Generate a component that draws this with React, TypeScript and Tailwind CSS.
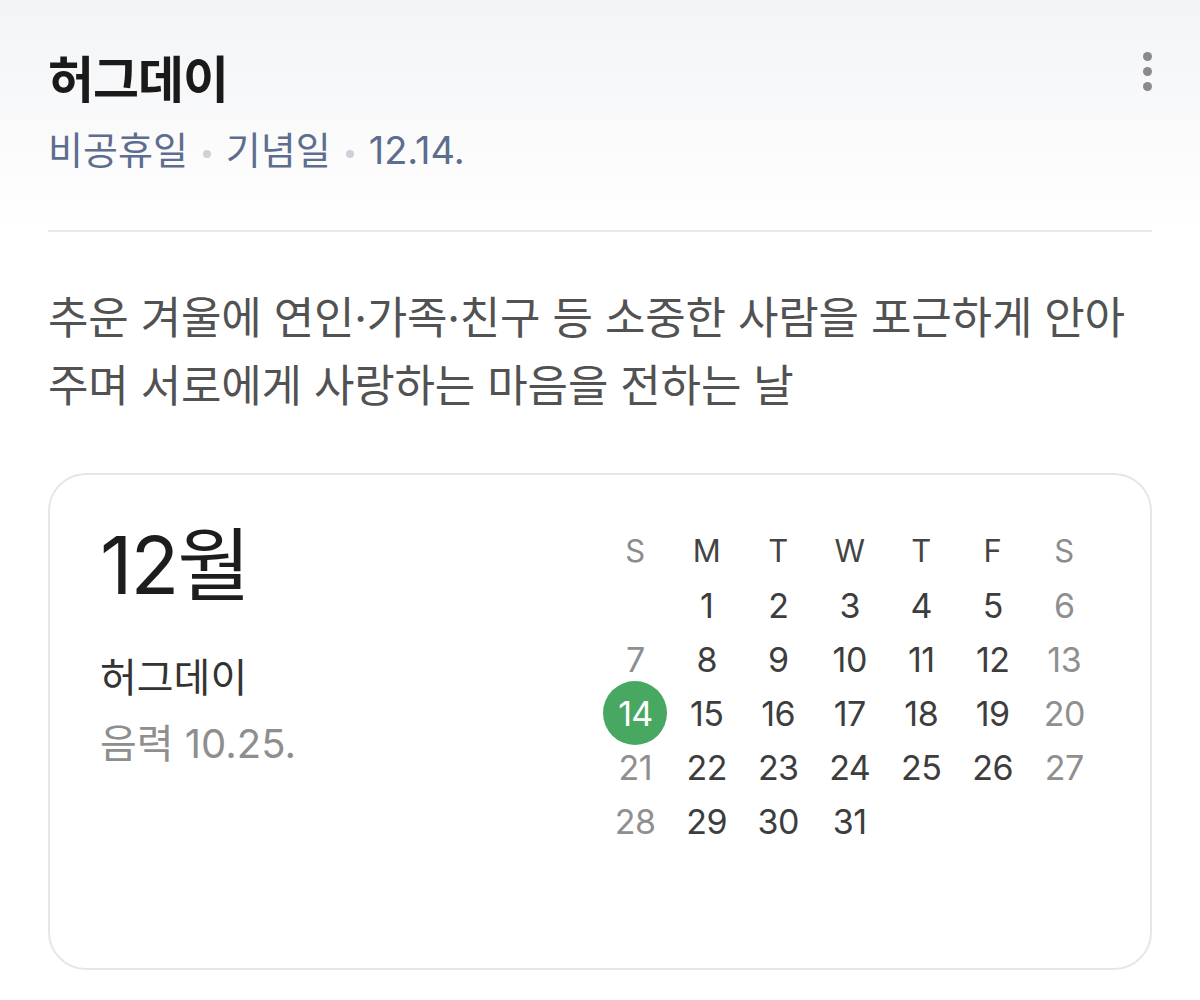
import React from "react";

const days: (number | null)[] = [null, ...Array.from({ length: 31 }, (_, i) => i + 1)];
const heads = ["S", "M", "T", "W", "T", "F", "S"];

function MoreIcon() {
  return (
    <div className="flex flex-col items-center gap-[6px] pt-[2px]">
      <span className="block w-[9px] h-[9px] rounded-full bg-[#8a8a8a]" />
      <span className="block w-[9px] h-[9px] rounded-full bg-[#8a8a8a]" />
      <span className="block w-[9px] h-[9px] rounded-full bg-[#8a8a8a]" />
    </div>
  );
}

function Dot() {
  return <span className="mx-[15px] inline-block w-[8px] h-[8px] rounded-full bg-[#cdd1d8] align-middle" />;
}

function MonthGrid() {
  return (
    <div className="grid grid-cols-[repeat(7,71.5px)] auto-rows-[54px]">
      {heads.map((h, i) => (
        <div
          key={"h" + i}
          className={
            "flex items-center justify-center text-[31px] " +
            (i === 0 || i === 6 ? "text-[#8c8c8c]" : "text-[#444]")
          }
        >
          {h}
        </div>
      ))}
      {days.map((d, i) => {
        const col = i % 7;
        const weekend = col === 0 || col === 6;
        if (d === null) return <div key={"e" + i} />;
        if (d === 14) {
          return (
            <div key={d} className="flex items-center justify-center">
              <span className="flex items-center justify-center w-[64px] h-[64px] rounded-full bg-[#48a862] text-white text-[34px] tracking-[-1px]">
                14
              </span>
            </div>
          );
        }
        return (
          <div
            key={d}
            className={
              "flex items-center justify-center text-[34px] tracking-[-0.5px] " +
              (weekend ? "text-[#8f8f8f]" : "text-[#3d3d3d]")
            }
          >
            {d}
          </div>
        );
      })}
    </div>
  );
}

export default function App() {
  return (
    <div className="w-[1200px] min-h-[1000px] bg-white font-['Inter','Noto_Sans_CJK_KR',sans-serif]">
      {/* header */}
      <div className="bg-gradient-to-b from-[#f3f4f6] to-white px-[48px] pt-[50px]">
        <div className="flex items-start justify-between">
          <h1 className="text-[50px] leading-[60px] font-bold text-[#1a1a1a] tracking-[-1px]">허그데이</h1>
          <MoreIcon />
        </div>
        <div className="mt-[17px] text-[38px] leading-[46px] text-[#5d6d8e]">
          비공휴일<Dot />기념일<Dot />12.14.
        </div>
        <div className="mt-[57px] h-[2px] bg-[#e8e9ec]" />
      </div>

      <div className="px-[48px]">
        <p className="mt-[52px] text-[44px] leading-[68px] text-[#525252] tracking-[-0.2px]">
          추운 겨울에 연인·가족·친구 등 소중한 사람을 포근하게 안아 주며 서로에게 사랑하는 마음을 전하는 날
        </p>

        <div className="mt-[53px] h-[497px] rounded-[38px] border-2 border-[#e6e6e6] flex justify-between pl-[50px] pr-[50px] pt-[49px]">
          <div className="pt-[2px]">
            <div className="text-[80px] leading-[78px] text-[#1d1d1d] tracking-[-2px]">12월</div>
            <div className="mt-[50px] text-[40px] leading-[48px] text-[#333]">허그데이</div>
            <div className="mt-[18px] text-[40px] leading-[48px] text-[#8e8e8e]">음력 10.25.</div>
          </div>
          <MonthGrid />
        </div>
      </div>
    </div>
  );
}
